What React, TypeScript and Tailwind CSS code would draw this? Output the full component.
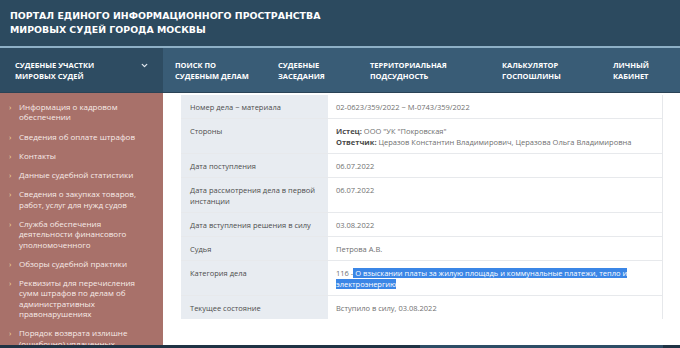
import { ChevronDown } from "lucide-react";

const sideLinks: string[][] = [
  ["Информация о кадровом", "обеспечении"],
  ["Сведения об оплате штрафов"],
  ["Контакты"],
  ["Данные судебной статистики"],
  ["Сведения о закупках товаров,", "работ, услуг для нужд судов"],
  ["Служба обеспечения", "деятельности финансового", "уполномоченного"],
  ["Обзоры судебной практики"],
  ["Реквизиты для перечисления", "сумм штрафов по делам об", "административных", "правонарушениях"],
  ["Порядок возврата излишне", "(ошибочно) уплаченных", "сумм"],
];

const navItems = [
  { a: "Поиск по", b: "судебным делам", w: "w-[103px]" },
  { a: "Судебные", b: "заседания", w: "w-[92px]" },
  { a: "Территориальная", b: "подсудность", w: "w-[132px]" },
  { a: "Калькулятор", b: "госпошлины", w: "w-[111px]" },
  { a: "Личный", b: "кабинет", w: "w-[60px]" },
];

function Row({ label, children }: { label: React.ReactNode; children: React.ReactNode }) {
  return (
    <div className="flex border-b border-[#e7e9ec] last:border-b-0">
      <div className="w-[147px] shrink-0 whitespace-nowrap bg-[#e8ecf1] pl-[9px] pt-[7px] pb-[5px] text-[#4d4d4d]">
        {label}
      </div>
      <div className="flex-1 pl-[8px] pr-[8px] pt-[7px] pb-[5px] text-[#707070]">{children}</div>
    </div>
  );
}

export default function App() {
  return (
    <div
      className="relative flex h-[348px] w-[680px] flex-col overflow-hidden bg-white"
      style={{ fontFamily: '"Open Sans", "Noto Sans", sans-serif' }}
    >
      <header className="h-[46px] shrink-0 bg-[#2c4a5f] pl-[10px] pt-[9px]">
        <div
          className="text-[9.4px] font-bold uppercase leading-[14px] text-white"
          style={{ fontFamily: '"DejaVu Sans", sans-serif' }}
        >
          Портал единого информационного пространства
          <br />
          мировых судей города Москвы
        </div>
      </header>
      <div className="h-[2px] shrink-0 bg-[#8eb0c6]" />

      <nav className="flex h-[45px] shrink-0 border-b border-[#2a4356] bg-[#395c76] text-[7.5px] font-bold uppercase leading-[11px] text-white">
        <div className="flex w-[163px] shrink-0 items-center justify-between bg-[#2e4c62] pl-[15px] pr-[14px] pt-[1px]">
          <span>
            Судебные участки
            <br />
            мировых судей
          </span>
          <ChevronDown size={9} strokeWidth={3.5} className="mb-[11px] text-[#dfe7ee]" />
        </div>
        <div className="flex items-center pl-[12px] pt-[1px]">
          {navItems.map((n) => (
            <div key={n.a} className={n.w}>
              {n.a}
              <br />
              {n.b}
            </div>
          ))}
        </div>
      </nav>

      <div className="flex min-h-0 flex-1">
        <aside className="w-[163px] shrink-0 bg-[#a8716a] pl-[9px] pt-[9px] text-[8px] leading-[10.4px] text-[#f7ebe8]">
          <ul className="flex flex-col gap-[8.8px]">
            {sideLinks.map((lines) => (
              <li key={lines[0]} className="flex">
                <span className="w-[10px] shrink-0 text-[#f0d9a0]">›</span>
                <span>
                  {lines.map((l, i) => (
                    <span key={i}>
                      {i > 0 && <br />}
                      {l}
                    </span>
                  ))}
                </span>
              </li>
            ))}
          </ul>
        </aside>

        <main className="flex-1 pl-[18px] pr-[17px] pt-[2px]">
          <div className="border-r border-[#e6e8eb] text-[7.5px] leading-[11px]">
            <Row label="Номер дела ~ материала">02-0623/359/2022 ~ М-0743/359/2022</Row>
            <Row label="Стороны">
              <span className="font-bold text-[#4a4a4a]">Истец:</span> ООО "УК "Покровская"
              <br />
              <span className="font-bold text-[#4a4a4a]">Ответчик:</span> Церазов Константин Владимирович, Церазова
              Ольга Владимировна
            </Row>
            <Row label="Дата поступления">06.07.2022</Row>
            <Row
              label={
                <>
                  Дата рассмотрения дела в первой
                  <br />
                  инстанции
                </>
              }
            >
              06.07.2022
            </Row>
            <Row label="Дата вступления решения в силу">03.08.2022</Row>
            <Row label="Судья">Петрова А.В.</Row>
            <Row label="Категория дела">
              116 -
              <span className="bg-[#3b86e6] text-white">
                {" "}
                О взыскании платы за жилую площадь и коммунальные платежи, тепло и электроэнергию
              </span>
            </Row>
            <Row label="Текущее состояние">Вступило в силу, 03.08.2022</Row>
          </div>
        </main>
      </div>

      <div className="absolute bottom-0 left-0 flex h-[3px] w-[680px] bg-[#1f3344]">
        <div className="ml-[420px] w-[243px] bg-[#2d4d66]" />
      </div>
    </div>
  );
}
